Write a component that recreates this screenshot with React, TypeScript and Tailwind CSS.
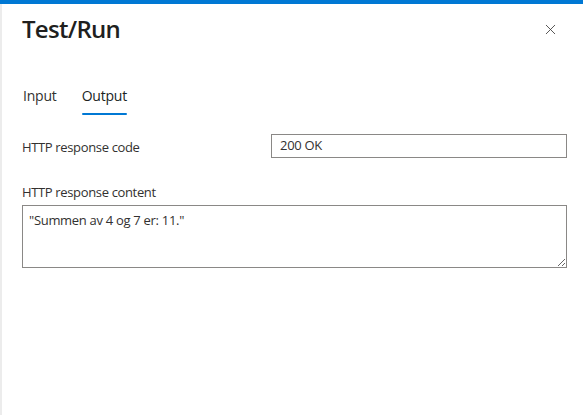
import { X } from "lucide-react";

export default function App() {
  return (
    <main className="flex h-[415px] w-[583px] flex-col overflow-hidden bg-white font-['Open_Sans',sans-serif] text-[#323130]">
      {/* Top accent */}
      <div className="h-[4px] w-full bg-[#0078d4]" />

      <div className="flex flex-1">
        {/* Page behind the panel */}
        <div className="w-[2px] bg-[#ececec]" />

        <div className="flex flex-1 flex-col pl-[20px] pr-[16px]">
          {/* Header */}
          <div className="flex items-center justify-between pt-[9px]">
            <h1 className="text-[24px] font-semibold leading-[32px] tracking-[-0.7px] text-[#201f1e]">
              Test/Run
            </h1>
            <button className="mr-[7px] flex h-[20px] w-[20px] items-center justify-center text-[#3b3a39]">
              <X size={17} strokeWidth={1.2} />
            </button>
          </div>

          {/* Tabs */}
          <div className="mt-[41px] flex gap-[25px] text-[14px] leading-[20px] tracking-[-0.2px]">
            <div className="pl-[1px] text-[#323130]">Input</div>
            <div className="flex flex-col items-stretch">
              <span className="font-medium text-[#201f1e]">Output</span>
              <span className="mt-[7px] h-[2px] rounded-full bg-[#0078d4]" />
            </div>
          </div>

          {/* Response code */}
          <div className="mt-[19px] flex items-start">
            <label className="mt-[4px] w-[249px] text-[13px] leading-[18px] tracking-[-0.35px] text-[#323130]">
              HTTP response code
            </label>
            <div className="flex h-[24px] flex-1 items-center border border-[#8a8886] px-[8px] text-[13px] tracking-[-0.3px] text-[#323130]">
              200 OK
            </div>
          </div>

          {/* Response content */}
          <label className="mt-[25px] text-[13px] leading-[18px] tracking-[-0.35px] text-[#323130]">
            HTTP response content
          </label>
          <textarea
            readOnly
            defaultValue={'"Summen av 4 og 7 er: 11."'}
            className="mt-[4px] h-[63px] w-full resize-y border border-[#8a8886] px-[6px] py-[5px] text-[13px] leading-[18px] tracking-[-0.3px] text-[#323130] outline-none"
          />
        </div>
      </div>
    </main>
  );
}
